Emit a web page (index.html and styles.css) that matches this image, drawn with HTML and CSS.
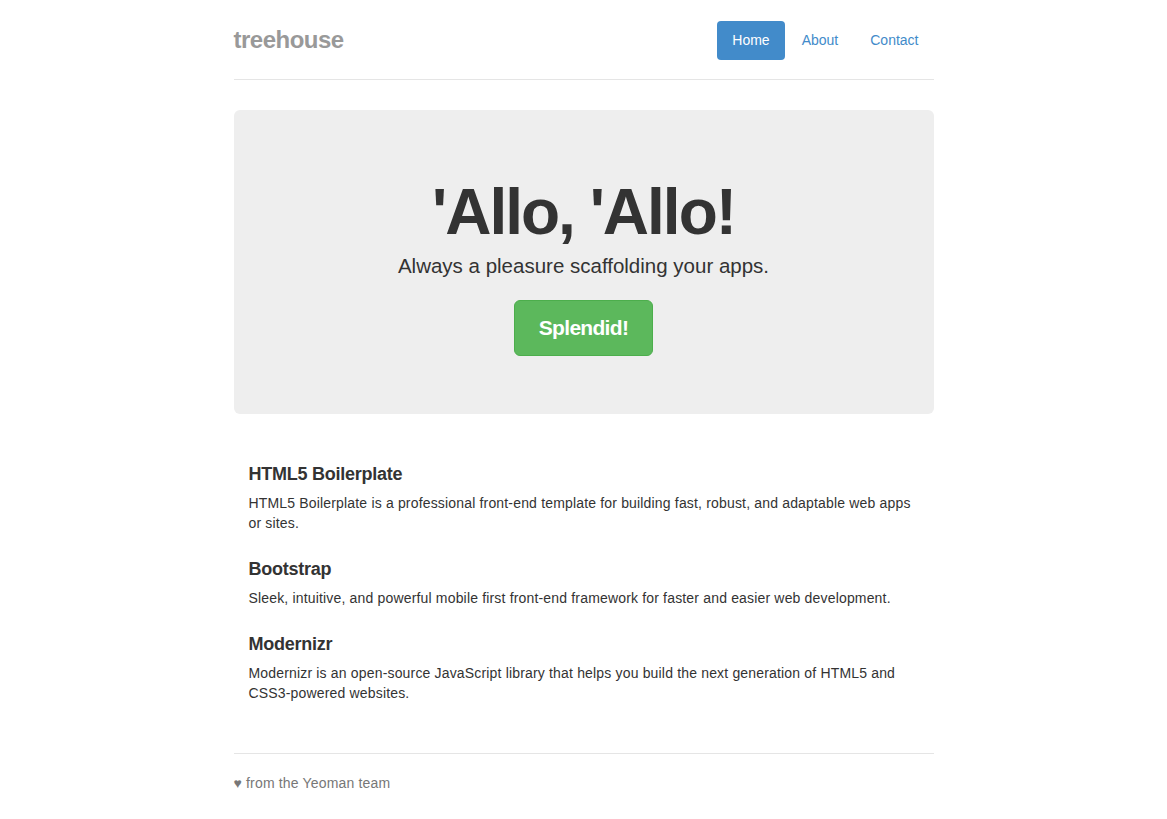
FILE: index.html
```html
<!DOCTYPE html>
<html lang="en">
<head>
<meta charset="utf-8">
<title>treehouse</title>
<link rel="stylesheet" href="styles.css">
</head>
<body>
<div class="container">
  <div class="header">
    <ul class="nav">
      <li class="active"><a href="#">Home</a></li>
      <li><a href="#">About</a></li>
      <li><a href="#">Contact</a></li>
    </ul>
    <h3 class="brand">treehouse</h3>
  </div>

  <div class="jumbotron">
    <h1>'Allo, 'Allo!</h1>
    <p class="lead">Always a pleasure scaffolding your apps.</p>
    <p class="cta"><a class="btn" href="#">Splendid!</a></p>
  </div>

  <div class="marketing">
    <h4>HTML5 Boilerplate</h4>
    <p>HTML5 Boilerplate is a professional front-end template for building fast, robust, and adaptable web apps or sites.</p>
    <h4>Bootstrap</h4>
    <p>Sleek, intuitive, and powerful mobile first front-end framework for faster and easier web development.</p>
    <h4>Modernizr</h4>
    <p>Modernizr is an open-source JavaScript library that helps you build the next generation of HTML5 and CSS3-powered websites.</p>
  </div>

  <div class="footer">
    <p>♥ from the Yeoman team</p>
  </div>
</div>
</body>
</html>
```
FILE: styles.css
```css
* { box-sizing: border-box; }
html, body { margin: 0; }
body {
  padding-top: 20px;
  padding-bottom: 20px;
  font-family: "Liberation Sans", Arial, Helvetica, sans-serif;
  font-size: 14px;
  line-height: 20px;
  color: #333;
  background: #fff;
}
a { text-decoration: none; color: #428bca; }
.container {
  max-width: 730px;
  margin: 0 auto;
  padding: 0 15px;
}
.header {
  display: flex;
  flex-direction: row-reverse;
  justify-content: space-between;
  align-items: center;
  padding-bottom: 19px;
  border-bottom: 1px solid #e5e5e5;
}
.brand {
  margin: 0;
  font-size: 24px;
  line-height: 40px;
  font-weight: bold;
  letter-spacing: -0.5px;
  color: #999;
}
.nav {
  display: flex;
  gap: 2px;
  list-style: none;
  margin: 0;
  padding: 0;
}
.nav a {
  display: block;
  padding: 10px 15px;
  line-height: 19px;
  border-radius: 4px;
  color: #428bca;
}
.nav .active a {
  background: #428bca;
  color: #fff;
}
.jumbotron {
  margin-top: 30px;
  margin-bottom: 30px;
  padding: 48px 60px;
  background: #eee;
  border-radius: 6px;
  text-align: center;
}
.jumbotron h1 {
  margin: 22px 0 7px;
  font-size: 64px;
  line-height: 64px;
  font-weight: bold;
  letter-spacing: -2px;
  color: #333;
}
.jumbotron .lead {
  margin: 0 0 19px;
  font-size: 20.5px;
  line-height: 30px;
  font-weight: normal;
}
.jumbotron .cta { margin: 0 0 10px; }
.btn {
  display: inline-block;
  padding: 14px 24px;
  font-size: 21px;
  line-height: 26px;
  font-weight: bold;
  letter-spacing: -0.7px;
  color: #fff;
  background: #5cb85c;
  border: 1px solid #4cae4c;
  border-radius: 6px;
}
.marketing {
  display: flow-root;
  margin: 40px 0;
  padding: 0 15px;
}
.marketing h4 {
  margin: 10px 0 9px;
  font-size: 18px;
  line-height: 20px;
  font-weight: bold;
  letter-spacing: -0.25px;
}
.marketing p {
  margin: 0 0 10px;
  letter-spacing: 0.17px;
}
.marketing p + h4 { margin-top: 26px; }
.footer {
  padding-top: 19px;
  color: #777;
  border-top: 1px solid #e5e5e5;
}
.footer p { margin: 0 0 10px; letter-spacing: 0.17px; }
```
